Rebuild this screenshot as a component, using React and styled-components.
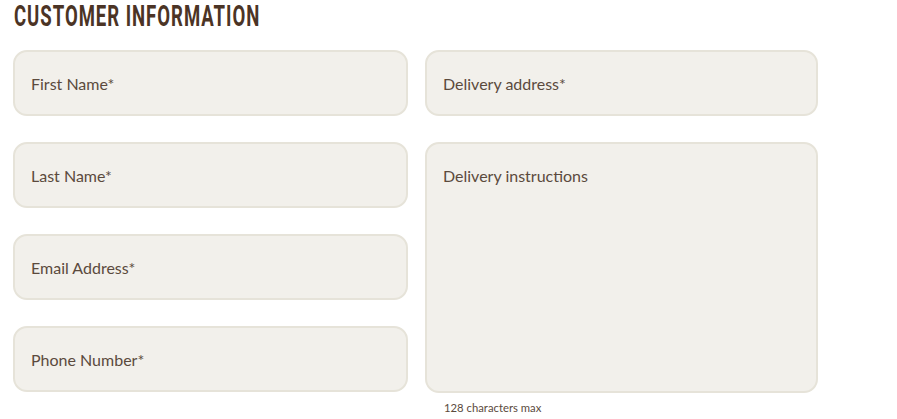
import React from 'react';
import styled, { createGlobalStyle } from 'styled-components';

const GlobalStyle = createGlobalStyle`
body {
  margin: 0;
  background: #fff;
  font-family: "Lato", "Open Sans", sans-serif;
}
`;

const Section = styled.section`
padding: 0 0 0 13px;
width: 805px;
`;

const Heading = styled.h2`
margin: 0;
height: 36px;
font-family: "Roboto", sans-serif;
font-weight: 700;
font-size: 29px;
line-height: 32px;
letter-spacing: 1.5px;
color: #4b3425;
padding-left: 1px;
white-space: nowrap;
`;

const HeadingText = styled.span`
display: inline-block;
transform: scaleX(0.64);
transform-origin: left center;
`;

const FormGrid = styled.div`
margin-top: 14px;
display: grid;
grid-template-columns: 395px 393px;
column-gap: 17px;
`;

const Column = styled.div`
display: flex;
flex-direction: column;
gap: 26px;
`;

const Field = styled.div`
box-sizing: border-box;
height: ${props => props.tall ? '251px' : '66px'};
background: #f2f0eb;
border: 2px solid #e6e3d9;
border-radius: 14px;
padding: ${props => props.tall ? '22px 16px' : '0 16px'};
display: flex;
align-items: ${props => props.tall ? 'flex-start' : 'center'};
font-size: 16px;
color: #5b4a3d;
`;

const Hint = styled.div`
margin: 8px 0 0 19px;
font-size: 11.3px;
color: #5b4a3d;
`;

export default function App() {
  return (
    <>
      <GlobalStyle />
      <Section>
        <Heading><HeadingText>CUSTOMER INFORMATION</HeadingText></Heading>
        <FormGrid>
          <Column>
            <Field>First Name*</Field>
            <Field>Last Name*</Field>
            <Field>Email Address*</Field>
            <Field>Phone Number*</Field>
          </Column>
          <Column>
            <Field>Delivery address*</Field>
            <div>
              <Field tall>Delivery instructions</Field>
              <Hint>128 characters max</Hint>
            </div>
          </Column>
        </FormGrid>
      </Section>
    </>
  );
}
